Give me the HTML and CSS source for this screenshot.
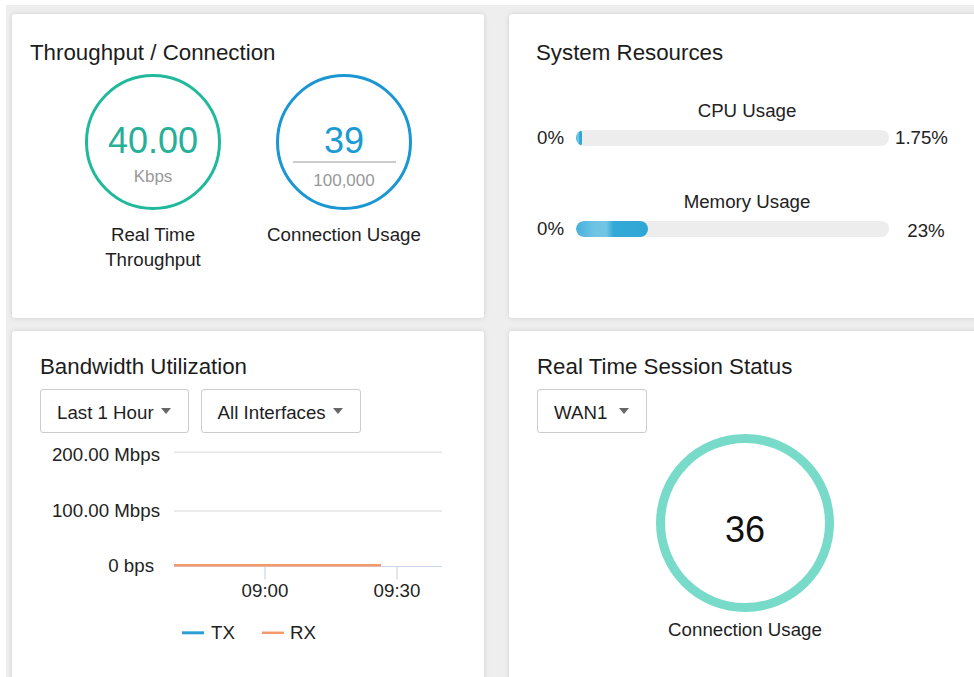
FILE: index.html
```html
<!DOCTYPE html>
<html lang="en">
<head>
<meta charset="utf-8">
<title>Dashboard</title>
<link rel="stylesheet" href="styles.css">
</head>
<body>
<main class="dash">

  <section class="card card-tc">
    <h2 class="card-title">Throughput / Connection</h2>
    <div class="gauges">
      <div class="gauge">
        <div class="ring ring-green">
          <div class="ring-value">40.00</div>
          <div class="ring-unit">Kbps</div>
        </div>
        <div class="gauge-label">Real Time Throughput</div>
      </div>
      <div class="gauge">
        <div class="ring ring-blue">
          <div class="ring-value">39</div>
          <div class="ring-divider"></div>
          <div class="ring-unit ring-unit-total">100,000</div>
        </div>
        <div class="gauge-label">Connection Usage</div>
      </div>
    </div>
  </section>

  <section class="card card-res">
    <h2 class="card-title">System Resources</h2>
    <div class="meter meter-cpu">
      <div class="meter-name">CPU Usage</div>
      <div class="meter-row">
        <span class="meter-min">0%</span>
        <div class="meter-track"><div class="meter-fill" style="width:1.75%"></div></div>
        <span class="meter-max">1.75%</span>
      </div>
    </div>
    <div class="meter meter-mem">
      <div class="meter-name">Memory Usage</div>
      <div class="meter-row">
        <span class="meter-min">0%</span>
        <div class="meter-track"><div class="meter-fill" style="width:23%"></div></div>
        <span class="meter-max meter-max-low">23%</span>
      </div>
    </div>
  </section>

  <section class="card card-bw">
    <h2 class="card-title">Bandwidth Utilization</h2>
    <div class="selects">
      <div class="select">Last 1 Hour<span class="caret"></span></div>
      <div class="select">All Interfaces<span class="caret"></span></div>
    </div>
    <svg class="chart" width="420" height="215" viewBox="0 0 420 215">
      <g class="grid">
        <line x1="134" y1="12.3" x2="402" y2="12.3"/>
        <line x1="134" y1="71" x2="402" y2="71"/>
      </g>
      <line class="axis" x1="134" y1="126.5" x2="402" y2="126.5"/>
      <line class="axis" x1="225" y1="126.5" x2="225" y2="139.5"/>
      <line class="axis" x1="357" y1="126.5" x2="357" y2="139.5"/>
      <g class="ylabels">
        <text x="120" y="20.5">200.00 Mbps</text>
        <text x="120" y="76.8">100.00 Mbps</text>
        <text x="114" y="131.5">0 bps</text>
      </g>
      <g class="xlabels">
        <text x="225" y="156.7">09:00</text>
        <text x="357" y="156.7">09:30</text>
      </g>
      <line class="series-rx" x1="134" y1="125.3" x2="341" y2="125.3"/>
      <g class="legend">
        <line class="series-tx" x1="142" y1="192.8" x2="164" y2="192.8"/>
        <text x="171" y="199">TX</text>
        <line class="series-rx" x1="222" y1="192.8" x2="244" y2="192.8"/>
        <text x="250" y="199">RX</text>
      </g>
    </svg>
  </section>

  <section class="card card-session">
    <h2 class="card-title">Real Time Session Status</h2>
    <div class="selects">
      <div class="select select-wan">WAN1<span class="caret"></span></div>
    </div>
    <div class="session-ring">36</div>
    <div class="session-label">Connection Usage</div>
  </section>

</main>
</body>
</html>
```

FILE: styles.css
```css
html, body {
  margin: 0;
  padding: 0;
  background: #ffffff;
  overflow: hidden;
}

body {
  width: 974px;
  height: 677px;
  font-family: "Liberation Sans", Arial, sans-serif;
  color: #222222;
}

.dash {
  margin: 5px 0 0 6px;
  padding: 9px 0 0 6px;
  width: max-content;
  background: #eeeeee;
  display: grid;
  grid-template-columns: 472px 472px;
  grid-template-rows: 304px 360px;
  column-gap: 25px;
  row-gap: 13px;
}

.card {
  background: #ffffff;
  border-radius: 3px;
  box-shadow: 0 0 5px rgba(0, 0, 0, 0.13);
  box-sizing: border-box;
}

.card-title {
  margin: 0;
  font-size: 22.3px;
  line-height: 26px;
  font-weight: normal;
  color: #1c1c1c;
}

/* Throughput / Connection */
.card-tc {
  padding: 26px 18px 0;
}

.gauges {
  display: flex;
  gap: 21px;
  padding-left: 38px;
  margin-top: 8px;
}

.gauge {
  width: 170px;
  display: flex;
  flex-direction: column;
  align-items: center;
}

.ring {
  width: 136px;
  height: 136px;
  box-sizing: border-box;
  border: 3px solid;
  border-radius: 50%;
  display: flex;
  flex-direction: column;
  align-items: center;
  padding-top: 44px;
}

.ring-green {
  border-color: #20b99b;
  color: #26b09a;
}

.ring-blue {
  border-color: #1a96d2;
  color: #1b9ad6;
}

.ring-value {
  font-size: 36px;
  line-height: 40px;
}

.ring-unit {
  font-size: 17px;
  line-height: 22px;
  color: #999999;
  margin-top: 5px;
}

.ring-divider {
  width: 103px;
  height: 2px;
  background: #cccccc;
}

.ring-unit-total {
  margin-top: 6.5px;
}

.gauge-label {
  margin-top: 13px;
  font-size: 18.7px;
  line-height: 24.5px;
  text-align: center;
  color: #1e1e1e;
}

/* System Resources */
.card-res {
  padding: 26px 27px 0;
}

.meter {
  font-size: 18.7px;
}

.meter-cpu {
  margin-top: 33px;
}

.meter-mem {
  margin-top: 39.5px;
}

.meter-name {
  line-height: 24px;
  text-align: center;
  padding-left: 4px;
}

.meter-row {
  display: flex;
  align-items: center;
  height: 24px;
  margin-top: 3px;
}

.meter-min {
  width: 40px;
  padding-left: 1px;
  box-sizing: border-box;
  line-height: 24px;
}

.meter-track {
  flex: 1;
  height: 16px;
  border-radius: 8px;
  background: #ededed;
  overflow: hidden;
}

.meter-fill {
  height: 100%;
  min-width: 6px;
  border-radius: 8px;
  background: linear-gradient(to right, #45b0dc 0%, #6fc4e4 25%, #70c5e5 42%, #33a9d6 52%, #2fa7d6 100%);
}

.meter-max {
  width: 65px;
  text-align: center;
  line-height: 24px;
}

.meter-max-low {
  position: relative;
  top: 2px;
  padding-left: 9px;
  box-sizing: border-box;
}

/* Bandwidth + Session shared */
.card-bw,
.card-session {
  padding: 22.5px 28px 0;
}

.selects {
  display: flex;
  gap: 12px;
  margin-top: 9px;
}

.select {
  height: 44px;
  box-sizing: border-box;
  border: 1px solid #cccccc;
  border-radius: 3px;
  padding: 5px 17px 0 16px;
  display: flex;
  align-items: center;
  font-size: 18.7px;
  line-height: 24px;
  color: #1e1e1e;
}

.caret {
  width: 0;
  height: 0;
  margin-left: 7px;
  margin-bottom: 5px;
  border-left: 5px solid transparent;
  border-right: 5px solid transparent;
  border-top: 6px solid #666666;
}

.select-wan .caret {
  margin-left: 12px;
}

/* Bandwidth chart */
.chart {
  display: block;
  margin-top: 7px;
  font-family: "Liberation Sans", Arial, sans-serif;
  font-size: 18.7px;
}

.chart .grid line {
  stroke: #e6e6e6;
  stroke-width: 1.5;
}

.chart .axis {
  stroke: #ccd6eb;
  stroke-width: 1.2;
}

.chart .ylabels text {
  text-anchor: end;
  fill: #222222;
}

.chart .xlabels text {
  text-anchor: middle;
  fill: #222222;
}

.chart .legend text {
  fill: #222222;
}

.chart .series-rx {
  stroke: #f49a6a;
  stroke-width: 2.5;
}

.chart .series-tx {
  stroke: #2a9fd6;
  stroke-width: 3;
}

/* Session status */
.session-ring {
  width: 178px;
  height: 178px;
  box-sizing: border-box;
  margin: 1px auto 0;
  border: 9px solid #78dbc9;
  border-radius: 50%;
  display: flex;
  align-items: center;
  justify-content: center;
  padding-top: 14px;
  font-size: 36px;
  line-height: 40px;
  color: #111111;
}

.session-label {
  margin-top: 6.5px;
  text-align: center;
  font-size: 18.7px;
  line-height: 24px;
  color: #1e1e1e;
}
```
